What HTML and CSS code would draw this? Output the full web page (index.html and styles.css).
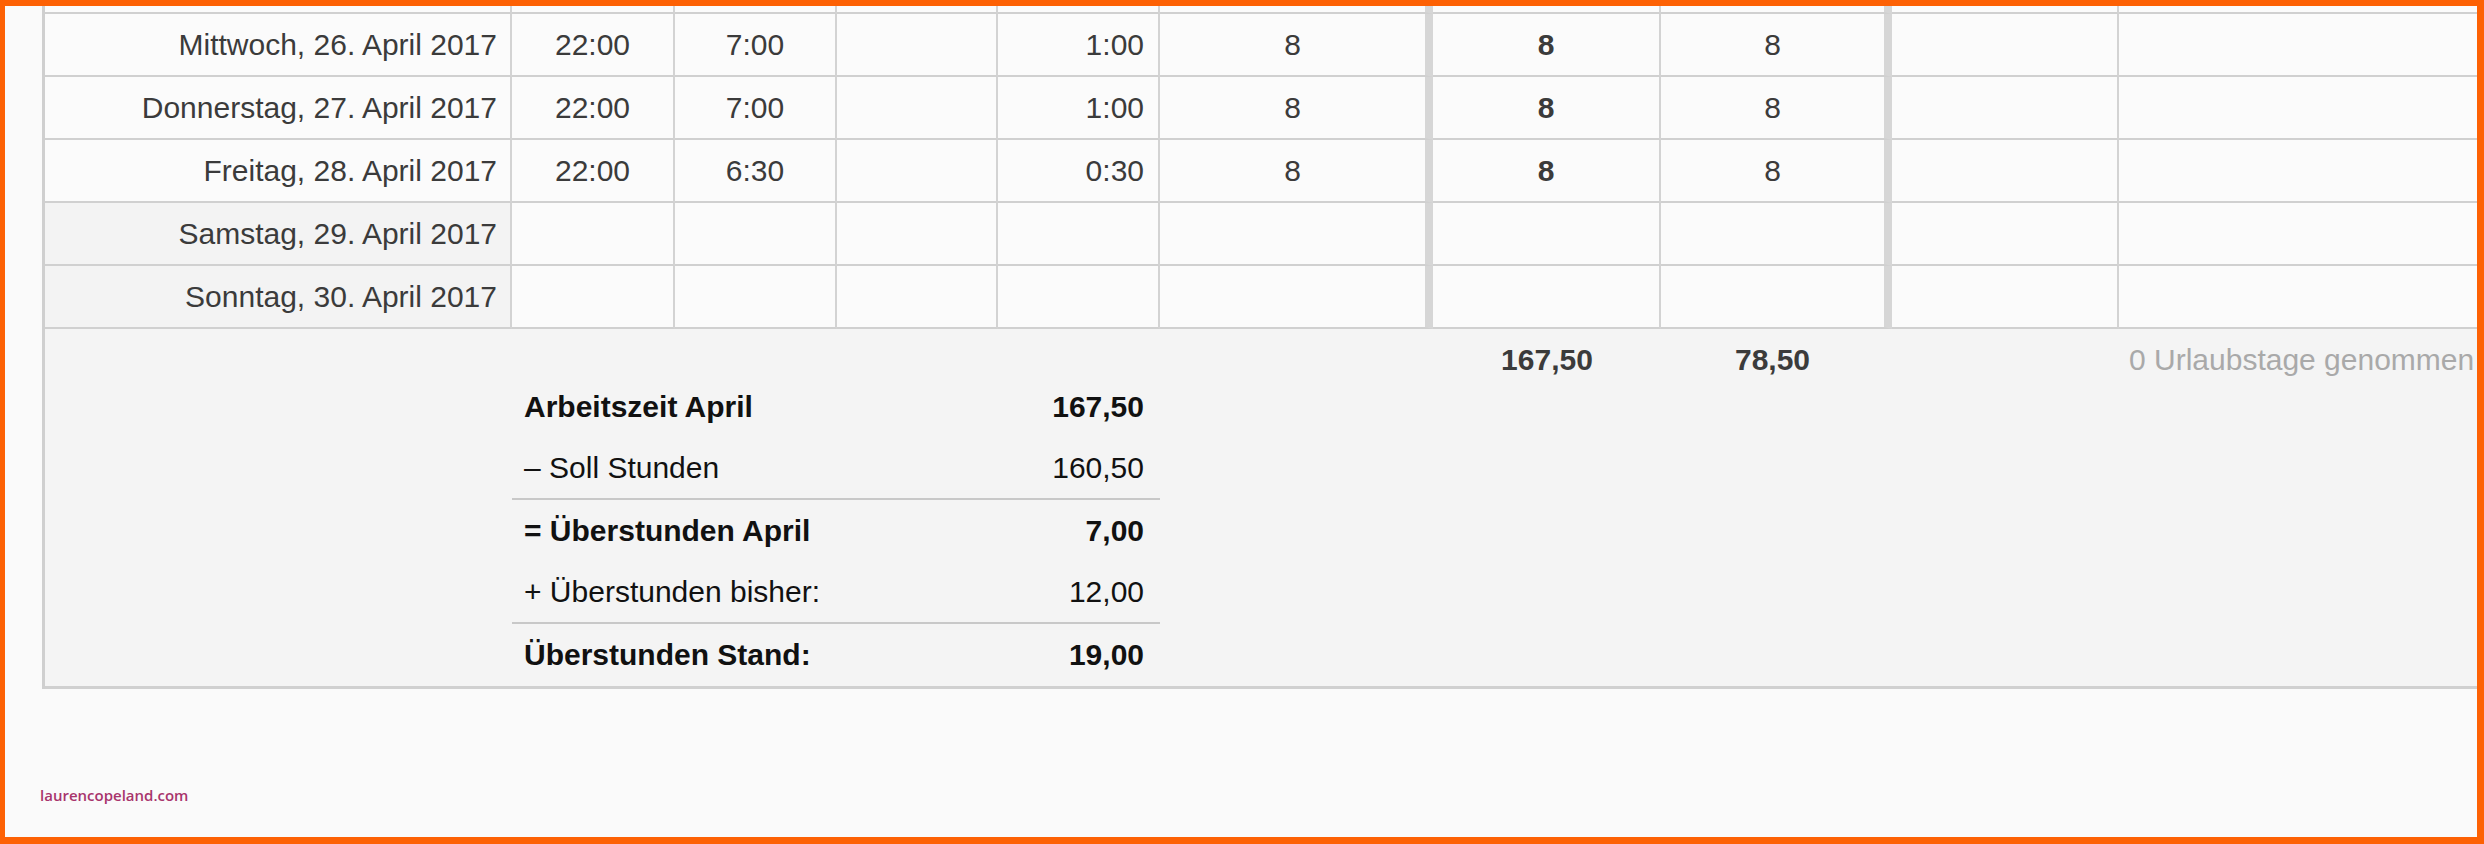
FILE: index.html
```html
<!DOCTYPE html>
<html>
<head>
  <title>Arbeitszeit April 2017</title>
  <link rel="stylesheet" href="styles.css">
</head>
<body>
  <div class="frame">
    <div class="sheet">
      <div class="row stub">
        <div class="cell"></div>
        <div class="cell"></div>
        <div class="cell"></div>
        <div class="cell"></div>
        <div class="cell"></div>
        <div class="cell sep"></div>
        <div class="cell"></div>
        <div class="cell sep"></div>
        <div class="cell"></div>
        <div class="cell"></div>
      </div>

      <div class="row">
        <div class="cell date">Mittwoch, 26. April 2017</div>
        <div class="cell">22:00</div>
        <div class="cell">7:00</div>
        <div class="cell"></div>
        <div class="cell num">1:00</div>
        <div class="cell sep">8</div>
        <div class="cell bold">8</div>
        <div class="cell sep">8</div>
        <div class="cell"></div>
        <div class="cell"></div>
      </div>

      <div class="row">
        <div class="cell date">Donnerstag, 27. April 2017</div>
        <div class="cell">22:00</div>
        <div class="cell">7:00</div>
        <div class="cell"></div>
        <div class="cell num">1:00</div>
        <div class="cell sep">8</div>
        <div class="cell bold">8</div>
        <div class="cell sep">8</div>
        <div class="cell"></div>
        <div class="cell"></div>
      </div>

      <div class="row">
        <div class="cell date">Freitag, 28. April 2017</div>
        <div class="cell">22:00</div>
        <div class="cell">6:30</div>
        <div class="cell"></div>
        <div class="cell num">0:30</div>
        <div class="cell sep">8</div>
        <div class="cell bold">8</div>
        <div class="cell sep">8</div>
        <div class="cell"></div>
        <div class="cell"></div>
      </div>

      <div class="row">
        <div class="cell date weekend">Samstag, 29. April 2017</div>
        <div class="cell"></div>
        <div class="cell"></div>
        <div class="cell"></div>
        <div class="cell"></div>
        <div class="cell sep"></div>
        <div class="cell"></div>
        <div class="cell sep"></div>
        <div class="cell"></div>
        <div class="cell"></div>
      </div>

      <div class="row">
        <div class="cell date weekend">Sonntag, 30. April 2017</div>
        <div class="cell"></div>
        <div class="cell"></div>
        <div class="cell"></div>
        <div class="cell"></div>
        <div class="cell sep"></div>
        <div class="cell"></div>
        <div class="cell sep"></div>
        <div class="cell"></div>
        <div class="cell"></div>
      </div>

      <div class="foot">
        <div class="summary">
          <div class="sum-row strong">
            <span>Arbeitszeit April</span>
            <span>167,50</span>
          </div>
          <div class="sum-row rule">
            <span>&ndash; Soll Stunden</span>
            <span>160,50</span>
          </div>
          <div class="sum-row strong">
            <span>= Überstunden April</span>
            <span>7,00</span>
          </div>
          <div class="sum-row rule">
            <span>+ Überstunden bisher:</span>
            <span>12,00</span>
          </div>
          <div class="sum-row strong">
            <span>Überstunden Stand:</span>
            <span>19,00</span>
          </div>
        </div>
        <div class="total total-hours">167,50</div>
        <div class="total total-target">78,50</div>
        <div class="leave">0 Urlaubstage genommen</div>
      </div>
    </div>

    <div class="credit">laurencopeland.com</div>
  </div>
</body>
</html>
```

FILE: styles.css
```css
body {
  margin: 0;
  background-color: #fafafa;
  font-family: "Liberation Sans", Arial, sans-serif;
}

.frame {
  height: 844px;
  box-sizing: border-box;
  border-style: solid;
  border-color: #fd6104;
  border-width: 6px 7px 7px 5px;
  background-color: #fafafa;
  overflow: hidden;
  display: flex;
  flex-direction: column;
}

.sheet {
  margin-left: 37px;
  width: max-content;
  border-left: 3px solid #cfcfcf;
}

.row,
.foot {
  display: grid;
  grid-template-columns: 467px 163px 162px 161px 162px 273px 228px 231px 227px 420px;
}

.cell {
  box-sizing: border-box;
  height: 63px;
  padding: 0 14px;
  display: flex;
  align-items: center;
  justify-content: center;
  background-color: #fbfbfb;
  border-right: 2px solid #d3d3d3;
  border-bottom: 2px solid #d0d0d0;
  color: #3b3b3b;
  font-size: 30px;
}

.stub .cell {
  height: 8px;
}

.cell.sep {
  border-right: 8px solid #d6d6d6;
}

.cell.date,
.cell.num {
  justify-content: flex-end;
}

.cell.date {
  padding-right: 13px;
}

.cell.weekend {
  background-color: #f3f3f3;
}

.cell.bold {
  font-weight: bold;
}

.foot {
  background-color: #f4f4f4;
  border-bottom: 3px solid #d0d0d0;
  font-size: 30px;
}

.summary {
  grid-column: 2 / 6;
  padding-top: 47px;
  color: #111;
}

.sum-row {
  box-sizing: border-box;
  height: 62px;
  padding: 0 16px 0 12px;
  display: flex;
  justify-content: space-between;
  align-items: center;
}

.sum-row.strong {
  font-weight: bold;
}

.sum-row.rule {
  border-bottom: 2px solid #c8c8c8;
}

.total {
  padding-top: 13px;
  line-height: 36px;
  text-align: center;
  font-weight: bold;
  color: #3b3b3b;
}

.total-hours {
  grid-column: 7;
}

.total-target {
  grid-column: 8;
  padding-right: 8px;
}

.leave {
  grid-column: 10;
  padding: 13px 0 0 10px;
  line-height: 36px;
  color: #a9a9a9;
  white-space: nowrap;
}

.credit {
  margin-top: auto;
  margin-bottom: 32px;
  padding-left: 35px;
  font-family: "Open Sans", sans-serif;
  font-size: 15px;
  font-weight: 600;
  line-height: 20px;
  color: #a8346c;
}
```
